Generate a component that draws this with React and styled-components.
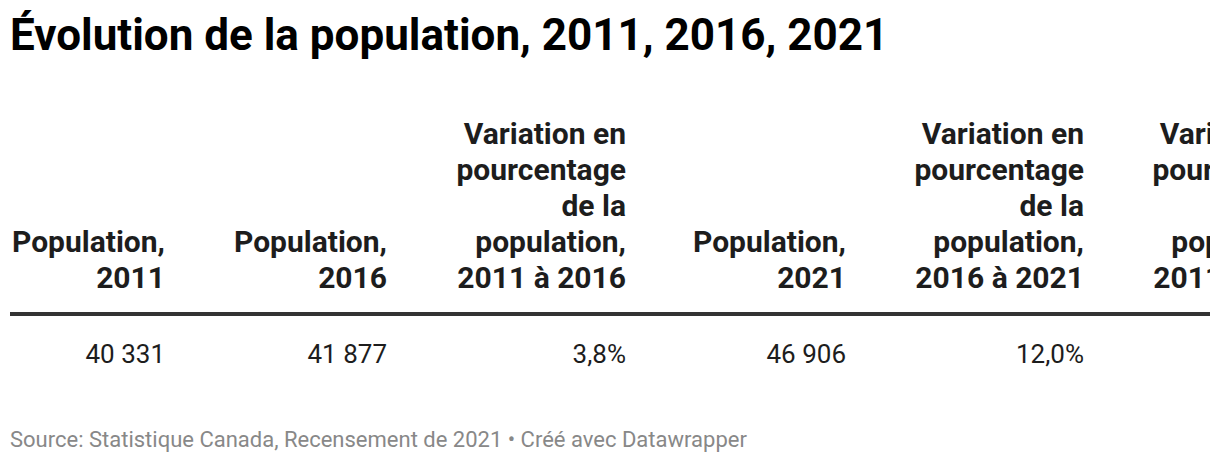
import React from "react";
import styled, { createGlobalStyle } from "styled-components";

const Global = createGlobalStyle`
  html, body { margin: 0; padding: 0; background: #ffffff; }
  body { font-family: Roboto, "Liberation Sans", sans-serif; }
`;

const Page = styled.div`
  width: 1220px;
  height: 464px;
  box-sizing: border-box;
  padding: 0 10px;
  overflow: hidden;
  display: flex;
  flex-direction: column;
`;

const Title = styled.h1`
  margin: 9px 0 0;
  font-size: 44px;
  line-height: 52px;
  font-weight: 700;
  color: #000000;
  white-space: nowrap;
`;

const TableClip = styled.div`
  margin-top: 55px;
  width: 1200px;
  overflow: hidden;
  flex-shrink: 0;
`;

const Grid = styled.div`
  display: grid;
  grid-template-columns: 155px 222px 239px 220px 238px 238px;
  width: max-content;
`;

const HeadCell = styled.div`
  display: flex;
  align-items: flex-end;
  justify-content: flex-end;
  text-align: right;
  font-size: 30px;
  line-height: 36px;
  font-weight: 700;
  color: #1d1d1d;
  padding-bottom: 16px;
  border-bottom: 4px solid #333333;
  white-space: pre-line;
`;

const DataCell = styled.div`
  text-align: right;
  font-size: 26px;
  line-height: 36px;
  font-weight: 400;
  color: #1d1d1d;
  padding-top: 20px;
`;

const Footer = styled.div`
  margin-top: 54px;
  font-size: 22px;
  line-height: 28px;
  color: #888888;
  white-space: nowrap;
`;

const headers = [
  "Population,\n2011",
  "Population,\n2016",
  "Variation en\npourcentage\nde la\npopulation,\n2011 à 2016",
  "Population,\n2021",
  "Variation en\npourcentage\nde la\npopulation,\n2016 à 2021",
  "Variation en\npourcentage\nde la\npopulation,\n2011 à 2021",
];

const values = ["40 331", "41 877", "3,8%", "46 906", "12,0%", "16,3%"];

export default function App() {
  return (
    <>
      <Global />
      <Page>
        <Title>Évolution de la population, 2011, 2016, 2021</Title>
        <TableClip>
          <Grid>
            {headers.map((h, i) => (
              <HeadCell key={"h" + i}>{h}</HeadCell>
            ))}
            {values.map((v, i) => (
              <DataCell key={"d" + i}>{v}</DataCell>
            ))}
          </Grid>
        </TableClip>
        <Footer>Source: Statistique Canada, Recensement de 2021 • Créé avec Datawrapper</Footer>
      </Page>
    </>
  );
}
